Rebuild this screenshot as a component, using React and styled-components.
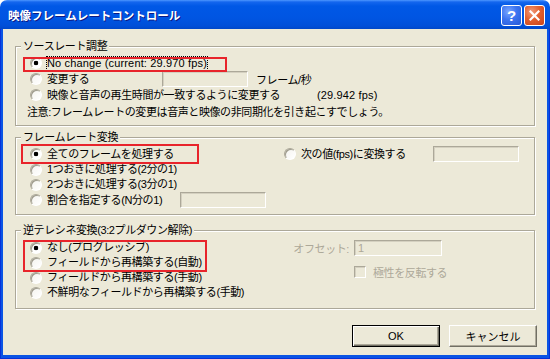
import React from "react";
import styled, { createGlobalStyle } from "styled-components";

const GlobalStyle = createGlobalStyle`
  html, body { margin: 0; padding: 0; background: #fff; }
  body { width: 550px; height: 359px; overflow: hidden; }
`;

const Window = styled.div`
  width: 550px;
  height: 359px;
  display: flex;
  flex-direction: column;
  border-radius: 7px 7px 0 0;
  overflow: hidden;
  font-family: "Liberation Sans", "Noto Sans CJK JP", sans-serif;
  font-size: 11px;
  letter-spacing: -0.4px;
`;

const TitleBar = styled.div`
  height: 29px;
  flex: none;
  display: flex;
  align-items: center;
  padding: 1px 5px 0 8px;
  box-sizing: border-box;
  background: linear-gradient(#4d97ff 0px, #1466ee 2px, #0058e6 6px, #0055e2 18px, #004fd8 26px, #0047c8 29px);
`;

const Title = styled.div`
  flex: 1;
  color: #fff;
  font-weight: bold;
  font-size: 11.5px;
  letter-spacing: 0;
  text-shadow: 1px 1px 0 #0a1883;
`;

const CaptionButton = styled.div`
  width: 21px;
  height: 21px;
  box-sizing: border-box;
  margin-left: ${(p) => p.$gap || 0}px;
  border: 1px solid #fff;
  border-radius: 3px;
  display: flex;
  align-items: center;
  justify-content: center;
  color: #fff;
  font-weight: bold;
  font-size: 15px;
  letter-spacing: 0;
  background: ${(p) =>
    p.$close
      ? "radial-gradient(circle at 35% 30%, #f19a7a 0, #e2602f 45%, #c8431a 100%)"
      : "radial-gradient(circle at 35% 30%, #7aa6ff 0, #3c74f0 45%, #2558d6 100%)"};
`;

const Frame = styled.div`
  flex: 1;
  display: flex;
  padding: 0 3px 4px;
  background: #0a54e4;
  box-shadow: inset 1px 0 #0831d9, inset -1px 0 #0831d9, inset 0 -1px #0831d9;
`;

const Client = styled.div`
  flex: 1;
  display: flex;
  flex-direction: column;
  background: #ece9d8;
  padding: 11px 12px 0;
`;

const Group = styled.fieldset`
  margin: ${(p) => p.$top || 0}px 0 0;
  padding: ${(p) => p.$pt || 2}px 0 ${(p) => p.$pb || 6}px;
  border: 1px solid #aca899;
  box-shadow: 1px 1px 0 #fff, inset 1px 1px 0 #fff;
  min-width: 0;
`;

const Legend = styled.legend`
  margin-left: 5px;
  padding: 0 2px;
  line-height: 13px;
  background: #ece9d8;
  color: #000;
`;

const Columns = styled.div`
  display: flex;
  align-items: flex-start;
`;

const Column = styled.div`
  display: flex;
  flex-direction: column;
  width: ${(p) => (p.$w ? `${p.$w}px` : "auto")};
  flex: none;
`;

const Row = styled.div`
  display: flex;
  align-items: center;
  height: ${(p) => p.$h || 15}px;
  padding-left: ${(p) => p.$indent ?? 14}px;
  color: ${(p) => (p.$disabled ? "#aca899" : "#000")};
  white-space: nowrap;
`;

const Radio = styled.span`
  flex: none;
  width: 12px;
  height: 12px;
  box-sizing: border-box;
  margin-right: 5px;
  border-radius: 50%;
  border: 1px solid;
  border-color: #aca899 #fff #fff #aca899;
  box-shadow: inset 1px 1px 0 #9d9a8c;
  background: ${(p) =>
    p.$checked
      ? "radial-gradient(circle, #000 0 2px, #fff 2.6px)"
      : "linear-gradient(135deg, #f4f3ee, #fff)"};
`;

const Text = styled.span`
  display: inline-block;
  width: ${(p) => (p.$w ? `${p.$w}px` : "auto")};
  line-height: 13px;
  letter-spacing: ${(p) => (p.$latin ? "0.15px" : "inherit")};
  outline: ${(p) => (p.$focus ? "1px dotted #000" : "none")};
  outline-offset: 0;
`;

const Field = styled.div`
  flex: none;
  width: ${(p) => p.$w}px;
  height: 16px;
  box-sizing: border-box;
  border: 1px solid;
  border-color: #aca899 #fff #fff #aca899;
  box-shadow: inset 1px 1px 0 #d4d0c0;
  color: #aca899;
  padding-left: 3px;
  line-height: 14px;
`;

const Mark = styled.div`
  position: relative;
  &::after {
    content: "";
    position: absolute;
    left: ${(p) => p.$l}px;
    top: ${(p) => p.$t}px;
    width: ${(p) => p.$w}px;
    height: ${(p) => p.$h}px;
    box-sizing: border-box;
    border: 2px solid #e8242b;
    pointer-events: none;
  }
`;

const Note = styled.div`
  height: 16px;
  display: flex;
  align-items: center;
  padding-left: 11px;
  white-space: nowrap;
`;

const Suffix = styled.span`
  margin-left: ${(p) => p.$gap || 0}px;
`;

const OffsetGrid = styled.div`
  margin: 0 92px 0 auto;
  display: grid;
  grid-template-columns: auto 88px;
  column-gap: 5px;
  row-gap: 8px;
  align-items: center;
  color: #aca899;
  white-space: nowrap;
`;

const OffsetLabel = styled.span`
  text-align: right;
`;

const CheckRow = styled.div`
  grid-column: 2;
  display: flex;
  align-items: center;
  height: 15px;
  width: 140px;
`;

const Check = styled.span`
  flex: none;
  width: 12px;
  height: 12px;
  box-sizing: border-box;
  margin-right: 7px;
  border: 1px solid;
  border-color: #aca899 #fff #fff #aca899;
  box-shadow: inset 1px 1px 0 #d4d0c0;
`;

const ButtonRow = styled.div`
  display: flex;
  justify-content: flex-end;
  gap: 9px;
  margin: 16px -2px 0 0;
`;

const Button = styled.div`
  width: 88px;
  height: 22px;
  box-sizing: border-box;
  display: flex;
  align-items: center;
  justify-content: center;
  background: #ece9d8;
  letter-spacing: 0;
  border: 1px solid;
  border-color: ${(p) => (p.$default ? "#000" : "#fff #716f64 #716f64 #fff")};
  box-shadow: ${(p) =>
    p.$default
      ? "inset 1px 1px 0 #fff, inset -1px -1px 0 #716f64, inset -2px -2px 0 #aca899"
      : "inset -1px -1px 0 #aca899"};
`;

const CloseIcon = () => (
  <svg width="11" height="11" viewBox="0 0 11 11">
    <path d="M1.5 1.5 L9.5 9.5 M9.5 1.5 L1.5 9.5" stroke="#fff" strokeWidth="2.2" strokeLinecap="square" />
  </svg>
);

export default function App() {
  return (
    <>
      <GlobalStyle />
      <Window>
        <TitleBar>
          <Title>映像フレームレートコントロール</Title>
          <CaptionButton>?</CaptionButton>
          <CaptionButton $close $gap={2}>
            <CloseIcon />
          </CaptionButton>
        </TitleBar>
        <Frame>
          <Client>
            <Group>
              <Legend>ソースレート調整</Legend>
              <Mark $l={7} $t={2} $w={204} $h={15}>
                <Row $h={16}>
                  <Radio $checked />
                  <Text $focus $latin>No change (current: 29.970 fps)</Text>
                </Row>
              </Mark>
              <Row $h={16}>
                <Radio />
                <Text $w={115}>変更する</Text>
                <Field $w={86} />
                <Suffix $gap={8}>フレーム/秒</Suffix>
              </Row>
              <Row $h={16}>
                <Radio />
                <Text $w={270}>映像と音声の再生時間が一致するように変更する</Text>
                <Text $latin>(29.942 fps)</Text>
              </Row>
              <Note>注意:フレームレートの変更は音声と映像の非同期化を引き起こすでしょう。</Note>
            </Group>

            <Group $top={5}>
              <Legend>フレームレート変換</Legend>
              <Columns>
                <Column $w={268}>
                  <Mark $l={5} $t={-2} $w={178} $h={20}>
                    <Row $h={16}>
                      <Radio $checked />
                      <Text>全てのフレームを処理する</Text>
                    </Row>
                  </Mark>
                  <Row>
                    <Radio />
                    <Text>1つおきに処理する(2分の1)</Text>
                  </Row>
                  <Row>
                    <Radio />
                    <Text>2つおきに処理する(3分の1)</Text>
                  </Row>
                  <Row $h={16}>
                    <Radio />
                    <Text $w={133}>割合を指定する(N分の1)</Text>
                    <Field $w={86} />
                  </Row>
                </Column>
                <Column>
                  <Row $h={16} $indent={0}>
                    <Radio />
                    <Text $w={132}>次の値(fps)に変換する</Text>
                    <Field $w={86} />
                  </Row>
                </Column>
              </Columns>
            </Group>

            <Group $top={9} $pt={3} $pb={8}>
              <Legend>逆テレシネ変換(3:2プルダウン解除)</Legend>
              <Columns>
                <Column>
                  <Mark $l={7} $t={0} $w={184} $h={32}>
                    <Row>
                      <Radio $checked />
                      <Text>なし(プログレッシブ)</Text>
                    </Row>
                    <Row>
                      <Radio />
                      <Text>フィールドから再構築する(自動)</Text>
                    </Row>
                  </Mark>
                  <Row>
                    <Radio />
                    <Text>フィールドから再構築する(手動)</Text>
                  </Row>
                  <Row>
                    <Radio />
                    <Text>不鮮明なフィールドから再構築する(手動)</Text>
                  </Row>
                </Column>
                <OffsetGrid>
                  <OffsetLabel>オフセット:</OffsetLabel>
                  <Field $w={88}>1</Field>
                  <CheckRow>
                    <Check />
                    <span>極性を反転する</span>
                  </CheckRow>
                </OffsetGrid>
              </Columns>
            </Group>

            <ButtonRow>
              <Button $default>OK</Button>
              <Button>キャンセル</Button>
            </ButtonRow>
          </Client>
        </Frame>
      </Window>
    </>
  );
}
